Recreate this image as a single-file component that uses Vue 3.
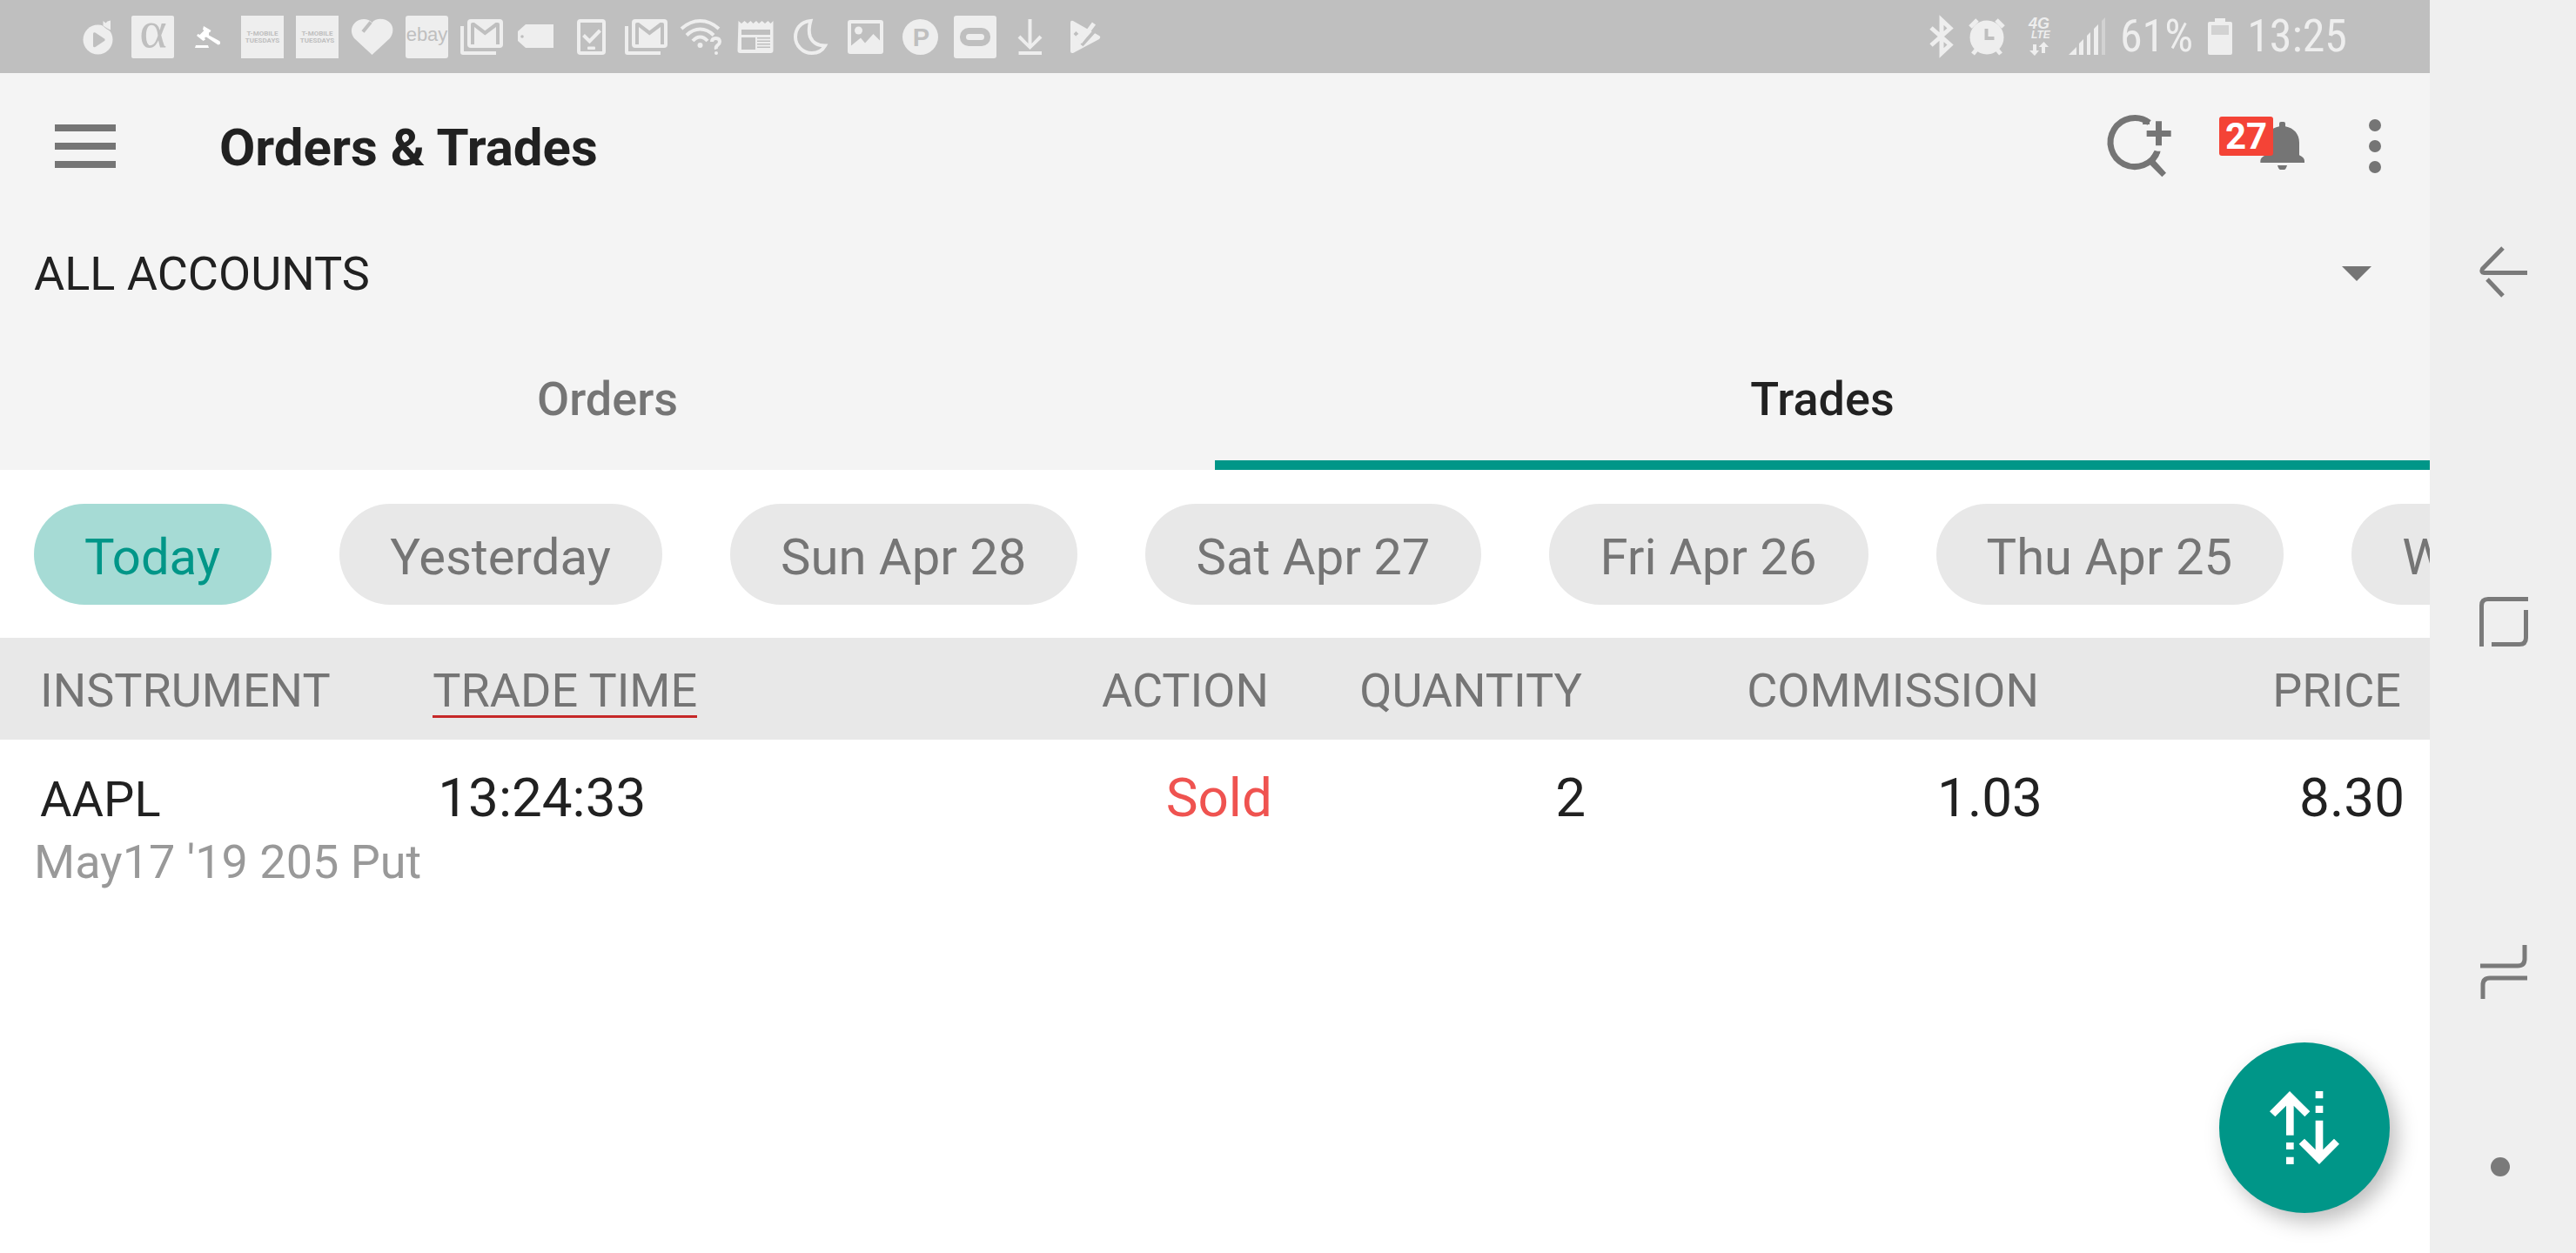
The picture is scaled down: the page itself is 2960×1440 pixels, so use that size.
<script setup>
import { ref } from 'vue'

const accounts = ['ALL ACCOUNTS']
const account = ref(accounts[0])
const tabs = ['Orders', 'Trades']
const activeTab = ref('Trades')
const days = ['Today', 'Yesterday', 'Sun Apr 28', 'Sat Apr 27', 'Fri Apr 26', 'Thu Apr 25', 'Wed Apr 24']
const activeDay = ref('Today')
const trades = [
  { symbol: 'AAPL', detail: "May17 '19 205 Put", time: '13:24:33', action: 'Sold', quantity: '2', commission: '1.03', price: '8.30' },
]
</script>

<template>
  <div class="screen">
    <div class="app">
      <div class="status">
        <div class="notifications">
          <svg class="note" viewBox="0 0 49 49">
            <circle cx="24.5" cy="27.5" r="17" />
            <path d="M27 9l7 6 5 3V13z" class="cut" />
            <path d="M30.500 6l3 2.500 2-2 3.500-1v11l-4-2-4.500-3z" />
            <path class="cut" d="M19 20.500q.5-2 2.500-1l10.500 7q1.500 1.500 0 2.500l-10.500 7q-2 1-2.500-1z" />
          </svg>
          <svg class="note" viewBox="0 0 49 49">
            <rect width="49" height="49" rx="2" />
            <text class="mark alpha" x="25" y="36">α</text>
          </svg>
          <svg class="note gavel" viewBox="0 0 49 49">
            <path d="M11 34h14l1 3H10zM20 12l8.500 5-1.500 2.500-1-.5 0 3.500 12 6.500q2 1.500.5 4l-2 .5L23 24.500l-2 1 1 2-2.500 1.500-7.500-6 1.500-2 2 1 5-5-1.500-1z" />
          </svg>
          <svg v-for="n in 2" :key="n" class="note" viewBox="0 0 49 49">
            <rect width="49" height="49" />
            <text class="mark tiny" x="24.500" y="23">T-MOBILE</text>
            <text class="mark tiny" x="24.500" y="31">TUESDAYS</text>
          </svg>
          <svg class="note" viewBox="0 0 49 49">
            <path d="M24.500 8C20 2.500 10 3 5 8-1 14 .5 21 4 26l20.500 19L45 26c4-5 5-13 0-18S29 2 24.500 8z" />
            <path d="M14 18.500l9-11" class="cut-line" />
          </svg>
          <svg class="note" viewBox="0 0 49 49">
            <rect width="49" height="49" rx="3" />
            <text class="mark ebay" x="24.500" y="29">ebay</text>
          </svg>
          <svg class="note" viewBox="0 0 49 49">
            <path d="M0 12h4v29h37v4H3q-3 0-3-3z" />
            <rect x="8" y="4" width="41" height="33" rx="4" />
            <path class="cut" d="M12 33V10q0-2 2-2h2l12.300 9.300L40.500 8h2.500q2 0 2 2v23h-4V13L28.300 22.500 16 13v20z" />
          </svg>
          <svg class="note" viewBox="0 0 49 49">
            <path d="M12 10h32v27H12L3 29V18z" />
            <circle class="cut" cx="8" cy="24" r="1.800" />
          </svg>
          <svg class="note" viewBox="0 0 49 49">
            <rect x="8" y="4" width="33" height="41" rx="4" />
            <rect class="cut" x="12" y="8" width="25" height="33" />
            <path class="line" d="M15.500 22.500l7 7L34.500 17" />
            <rect x="20" y="35.500" width="9" height="3.500" rx="1" />
          </svg>
          <svg class="note" viewBox="0 0 49 49">
            <path d="M0 12h4v29h37v4H3q-3 0-3-3z" />
            <rect x="8" y="4" width="41" height="33" rx="4" />
            <path class="cut" d="M12 33V10q0-2 2-2h2l12.300 9.300L40.500 8h2.500q2 0 2 2v23h-4V13L28.300 22.500 16 13v20z" />
          </svg>
          <svg class="note" viewBox="0 0 49 49">
            <path class="line" d="M2 15Q12 6 23.500 6T45 15M8 22.500q7-7 15.500-7T39 22.500M15 29q4-4.500 8.500-4.500T32 29" />
            <circle cx="23.500" cy="34" r="3" />
            <path class="line" d="M37 30q0-4 4.500-4t4.500 4q0 2-2.500 4T42 38.500" />
            <circle cx="42" cy="43" r="2" />
          </svg>
          <svg class="note" viewBox="0 0 49 49">
            <path d="M4.500 6l3.500 3 3.500-3 3.500 3 3.500-3 3 3 3.500-3 3 3 3.500-3 3.500 3 3.500-3 3 3 3-3v34q0 3-3 3h-35q-3 0-3-3z" />
            <path class="cut" d="M8 16h33v6H8zM8 25h16v14H8zM26 25h15v1.500H26zM26 28.500h15V30H26zM26 32h15v1.500H26zM26 35.500h15V37H26z" />
          </svg>
          <svg class="note" viewBox="0 0 49 49">
            <path class="line" d="M24.500 6C12 7 7 16 7 24.500 7 34 15 43 26 43c7 0 12-3 15-8.500-8 0-14-3-17-10-2-6-1.500-12 .5-18.500z" />
          </svg>
          <svg class="note" viewBox="0 0 49 49">
            <rect x="4" y="5" width="41" height="39" rx="3" />
            <path class="cut" d="M8 9h33v19.500L33.500 21 24 31.500l-5-6L8 34.500z" />
            <circle cx="16.500" cy="17" r="4.500" />
          </svg>
          <svg class="note" viewBox="0 0 49 49">
            <circle cx="24.500" cy="24.500" r="20.500" />
            <text class="mark pin" x="25.500" y="35">P</text>
          </svg>
          <svg class="note" viewBox="0 0 49 49">
            <rect width="49" height="49" rx="3" />
            <rect class="cut" x="7" y="14" width="35" height="21" rx="10" />
            <rect x="14" y="21" width="21" height="7" rx="3.500" />
          </svg>
          <svg class="note" viewBox="0 0 49 49">
            <path d="M22.500 4h4v28l9-9.500 3 3L24.500 39 10.500 25.500l3-3 9 9.500zM11.500 41h26.500v4H11.500z" />
          </svg>
          <svg class="note" viewBox="0 0 49 49">
            <path d="M8 8q0-3 3-2l30 17q2.500 1.500 0 4L11 43q-3 .5-3-2z" />
            <path class="cut-line" d="M13 19.500l8 8M21 34L40 13" />
            <path class="line wide" d="M16 22l5 6L35 9" />
          </svg>
        </div>
        <div class="system">
          <svg width="28" height="44" viewBox="0 0 28 44">
            <path class="line wide" d="M2 12l22 19.500-10 9.500V3l10 9.500L2 32" />
          </svg>
          <svg width="42" height="44" viewBox="0 0 42 44">
            <path class="line wide" d="M2 11l8-8M40 11l-8-8M10 36l-5 6M32 36l5 6" />
            <circle cx="21" cy="23" r="19.500" />
            <path class="cut" d="M18.500 13h4v9h7v4h-11z" />
          </svg>
          <svg width="37" height="44" viewBox="0 0 37 44">
            <text class="net" x="10" y="13">4G</text>
            <text class="net small" x="13" y="24">LTE</text>
            <path d="M15 31h4v7h3l-5 6-6-6h4zM29 41h-4v-7h-3.500l6-6 5.500 6h-4z" />
          </svg>
          <svg width="44" height="44" viewBox="0 0 44 44">
            <path d="M2 43l9-9v9zM14 30l5-5v18h-5zM23 21l4-4v26h-4zM31 13l5-5v35h-5z" />
            <path class="faint" d="M40 4l4-4v43h-4z" />
          </svg>
          <span>61%</span>
          <svg width="28" height="44" viewBox="0 0 28 44">
            <path d="M8 1h12v4h6q2 0 2 2v34q0 2-2 2H2q-2 0-2-2V7q0-2 2-2h6z" />
            <path class="faint" d="M4 9h20v11H4z" />
          </svg>
          <span>13:25</span>
        </div>
      </div>

      <header class="head">
        <div class="toolbar">
          <button class="icon" aria-label="Menu">
            <svg width="70" height="50" viewBox="0 0 70 50"><path d="M0 0h70v8H0zM0 21h70v8H0zM0 42h70v8H0z" /></svg>
          </button>
          <h1>Orders &amp; Trades</h1>
          <button class="icon" aria-label="Add symbol">
            <svg width="78" height="74" viewBox="120 60 234 222">
              <path class="ring" d="M269 90A84 84 0 1 0 297 189" />
              <path d="M248 81l22 6v9h-24zM286 188h22q-6 20-18 34l37 41-14 14-39-39-8-16z" />
              <path d="M291 85h21v32h32v21h-32v31h-21v-31h-31v-21h31z" />
            </svg>
          </button>
          <button class="icon bell" aria-label="Notifications">
            <svg width="98" height="72" viewBox="510 66 294 216">
              <path d="M717 106V96q0-6 6-6h9q6 0 6 6v10c30 6 48 26 48 56v43q18 8 18 20v6H652v-6q0-12 18-20v-43c0-30 18-50 47-56zM711 240h33q-4 15-10 15h-13q-6 0-10-15z" />
            </svg>
            <span class="badge">27</span>
          </button>
          <button class="icon" aria-label="More options">
            <svg width="58" height="64" viewBox="0 0 58 64"><circle cx="29" cy="8" r="7" /><circle cx="29" cy="32" r="7" /><circle cx="29" cy="56" r="7" /></svg>
          </button>
        </div>
        <div class="account">
          <select v-model="account" aria-label="Account">
            <option v-for="a in accounts" :key="a">{{ a }}</option>
          </select>
          <svg class="caret" width="34" height="17" viewBox="0 0 34 17"><path d="M0 0h34L17 17z" /></svg>
        </div>
        <nav class="tabs">
          <button v-for="t in tabs" :key="t" :class="{ active: t === activeTab }" @click="activeTab = t">{{ t }}</button>
        </nav>
      </header>

      <div class="days">
        <button v-for="d in days" :key="d" :class="{ active: d === activeDay }" @click="activeDay = d">{{ d }}</button>
      </div>

      <table>
        <thead>
          <tr>
            <th class="c-instrument">INSTRUMENT</th>
            <th class="c-time"><button class="sort">TRADE TIME</button></th>
            <th class="c-action num">ACTION</th>
            <th class="c-quantity num">QUANTITY</th>
            <th class="c-commission num">COMMISSION</th>
            <th class="num">PRICE</th>
          </tr>
        </thead>
        <tbody>
          <tr v-for="t in trades" :key="t.time">
            <td class="instrument">
              <div class="symbol">{{ t.symbol }}</div>
              <div class="detail">{{ t.detail }}</div>
            </td>
            <td class="time">{{ t.time }}</td>
            <td class="num sold">{{ t.action }}</td>
            <td class="num">{{ t.quantity }}</td>
            <td class="num">{{ t.commission }}</td>
            <td class="num">{{ t.price }}</td>
          </tr>
        </tbody>
      </table>

      <button class="fab" aria-label="New order">
        <svg width="80" height="84" viewBox="0 0 240 252">
          <path d="M69 0l70 70-18 18-38-38v102H57V50L19 88 0 70zM57 177h26v24H57zM57 227h26v25H57zM158 0h26v25h-26zM158 50h26v25h-26zM158 101h26v101l38-38 18 18-69 70-70-70 19-18 38 38z" />
        </svg>
      </button>
    </div>

    <nav class="navbar">
      <button aria-label="Back">
        <svg width="56" height="60" viewBox="0 0 56 60"><path d="M27 2L3.500 26q-2 4 2 4.500H55M9 38l18 19" /></svg>
      </button>
      <button aria-label="Home">
        <svg width="56" height="58" viewBox="0 0 56 58"><path d="M2.500 57V10q0-7.500 7.500-7.500h46M14 54.500h32q7.500 0 7.500-7.500V15" /></svg>
      </button>
      <button aria-label="Recents">
        <svg width="54" height="62" viewBox="0 0 54 62"><path d="M0 24h43q8 0 8-8V0M54 38H11q-8 0-8 8v16" /></svg>
      </button>
      <button class="pin-bar" aria-label="Hide navigation bar"><span class="dot"></span></button>
    </nav>
  </div>
</template>

<style>
body {
  background: #fff;
}
</style>

<style scoped>
.screen {
  display: flex;
  min-height: 100vh;
  font-family: Roboto, "Liberation Sans", sans-serif;
  font-size: 54px;
  color: #212121;
}
.screen * {
  box-sizing: border-box;
}
button,
select {
  border: 0;
  padding: 0;
  margin: 0;
  background: none;
  font: inherit;
  color: inherit;
}
svg {
  display: block;
  flex: none;
  overflow: visible;
}
.app {
  position: relative;
  flex: 1;
  min-width: 0;
  overflow: hidden;
}

.status {
  display: flex;
  justify-content: space-between;
  align-items: center;
  height: 84px;
  padding: 0 95px 0 88px;
  background: #bfbfbf;
  color: #eee;
  fill: #eee;
}
.notifications {
  display: flex;
  gap: 14px;
}
.note {
  width: 49px;
  height: 49px;
}
.gavel {
  fill: #fff;
}
.status .cut {
  fill: #bfbfbf;
}
.status .line {
  fill: none;
  stroke: #eee;
  stroke-width: 4;
}
.status .wide {
  stroke-width: 5;
}
.status .cut-line {
  fill: none;
  stroke: #bfbfbf;
  stroke-width: 4;
}
.status .faint {
  fill: #d2d2d2;
}
.mark {
  fill: #bfbfbf;
  text-anchor: middle;
}
.alpha {
  font: 60px "Liberation Serif", serif;
}
.tiny {
  font: bold 8px Roboto, sans-serif;
}
.ebay {
  font: 22px "Liberation Sans", sans-serif;
}
.pin {
  font: bold 29px "Liberation Sans", sans-serif;
}
.net {
  font: italic bold 18px "Liberation Sans", sans-serif;
}
.net.small {
  font-size: 12px;
}
.system {
  display: flex;
  align-items: center;
  gap: 17px;
  font-family: "Roboto Condensed", "Liberation Sans Narrow", Roboto, sans-serif;
  font-size: 52px;
  line-height: 64px;
}

.head {
  background: #f4f4f4;
}
.toolbar {
  display: flex;
  align-items: center;
  gap: 52px;
  height: 172px;
  padding: 0 34px 4px 63px;
}
.icon {
  fill: #757575;
}
.ring {
  fill: none;
  stroke: #757575;
  stroke-width: 21;
}
h1 {
  flex: 1;
  margin: 0 0 0 67px;
  padding-top: 4px;
  font-size: 60px;
  line-height: 72px;
  font-weight: 700;
}
.bell {
  position: relative;
}
.badge {
  position: absolute;
  left: 0;
  top: 2px;
  width: 62px;
  border-radius: 3px;
  background: #f44336;
  color: #fff;
  font-size: 42px;
  line-height: 45px;
  font-weight: 700;
  text-align: center;
}
.account {
  display: grid;
  align-items: center;
  height: 116px;
}
.account > * {
  grid-area: 1 / 1;
}
select {
  appearance: none;
  width: 100%;
  height: 100%;
  padding: 0 39px;
}
.caret {
  justify-self: end;
  margin-right: 67px;
  fill: #757575;
  pointer-events: none;
}
.tabs {
  display: flex;
}
.tabs button {
  flex: 1;
  height: 168px;
  padding-top: 15px;
  border-bottom: 11px solid transparent;
  font-weight: 500;
  color: #757575;
}
.tabs .active {
  color: #212121;
  border-bottom-color: #009688;
}

.days {
  display: flex;
  gap: 78px;
  padding: 39px 39px 38px;
  overflow: hidden;
}
.days button {
  flex: none;
  height: 116px;
  padding: 6px 59px 0 58px;
  border-radius: 58px;
  background: #e8e8e8;
  color: #757575;
  font-size: 58px;
  white-space: nowrap;
}
.days .active {
  background: #a6dbd5;
  color: #009688;
}

table {
  width: 100%;
  table-layout: fixed;
  border-collapse: collapse;
}
th {
  height: 117px;
  padding: 33px 0 0;
  background: #e8e8e8;
  color: #757575;
  font-weight: 400;
  line-height: 56px;
  text-align: left;
  vertical-align: top;
}
td {
  padding: 31px 0 0;
  font-size: 62px;
  line-height: 72px;
  vertical-align: baseline;
  white-space: nowrap;
}
.c-instrument {
  width: 17.2%;
  padding-left: 46px;
}
.c-time {
  width: 23.3%;
  padding-left: 17px;
}
.c-action,
.c-quantity {
  width: 12.9%;
}
.c-commission {
  width: 18.8%;
}
.sort {
  display: block;
  border-bottom: 3px solid #c62828;
}
.num {
  text-align: right;
}
th.num {
  padding-right: 33px;
}
td.num {
  padding-right: 29px;
}
.instrument {
  padding-left: 39px;
  font-size: 54px;
}
.symbol {
  padding-left: 7px;
  font-size: 56px;
}
.detail {
  color: #999;
}
.time {
  padding-left: 23px;
}
.sold {
  color: #ef5350;
}

.fab {
  position: absolute;
  right: 46px;
  bottom: 46px;
  display: flex;
  align-items: center;
  justify-content: center;
  width: 196px;
  height: 196px;
  border-radius: 50%;
  background: #009688;
  fill: #fff;
  box-shadow: 8px 10px 24px rgba(0, 0, 0, 0.26);
}

.navbar {
  display: flex;
  flex-direction: column;
  width: 168px;
  padding: 112px 0 76px;
  background: #efefef;
}
.navbar button {
  flex: 1;
  display: flex;
  align-items: center;
  justify-content: center;
  padding-left: 2px;
}
.navbar svg {
  fill: none;
  stroke: #7a7a7a;
  stroke-width: 5;
}
.navbar .pin-bar {
  flex: 0 0 46px;
  padding: 0 6px 0 0;
}
.dot {
  width: 22px;
  height: 22px;
  border-radius: 50%;
  background: #7a7a7a;
}
</style>
